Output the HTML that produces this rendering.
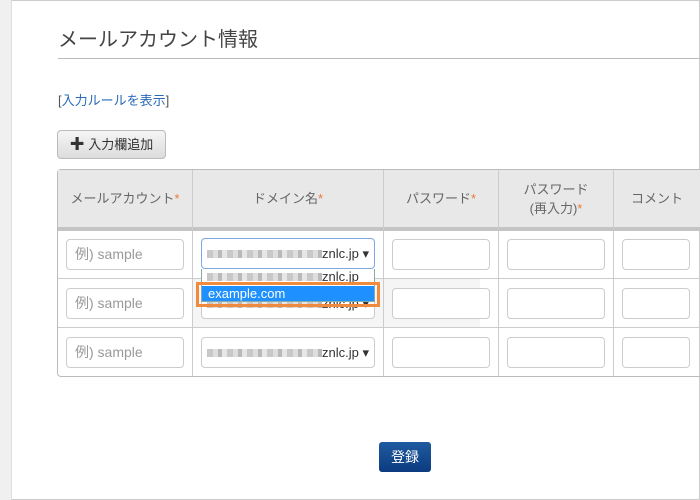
<!DOCTYPE html>
<html><head><meta charset="utf-8"><style>
*{box-sizing:border-box;margin:0;padding:0}
body{width:700px;height:500px;background:#fff;position:relative;overflow:hidden;font-family:"Liberation Sans","Noto Sans CJK JP",sans-serif;color:#555}
.a{position:absolute}
.inp{position:absolute;height:31px;border:1px solid #ccc;border-radius:4px;background:#fff;font-size:14px;color:#999;padding-left:8px;line-height:29px}
.sel{position:absolute;left:201px;width:174px;height:31px;border:1px solid #ccc;border-radius:4px;background:#fff;font-size:13px;color:#333;line-height:29px}
.blur{position:absolute;left:5px;top:11px;width:115px;height:8px;background:repeating-linear-gradient(90deg,#c8c8c8 0 6px,#dedede 6px 11px,#b9b9b9 11px 15px,#e6e6e6 15px 20px)}
.th{position:absolute;top:170px;height:57px;display:flex;align-items:center;justify-content:center;text-align:center;font-size:13px;color:#666;line-height:19px}
.st{color:#e87a3b}
</style></head><body>
<div class="a" style="left:0;top:0;width:700px;height:500px;border:1px solid #ccc;border-left:none"></div>
<div class="a" style="left:0;top:0;width:12px;height:500px;background:#f0f0f0;border-right:1px solid #ddd"></div>
<div class="a" style="left:58px;top:23px;font-size:20px;color:#444">メールアカウント情報</div>
<div class="a" style="left:58px;top:58px;width:642px;height:1px;background:#bbb"></div>
<div class="a" style="left:58px;top:90px;font-size:13px;color:#2a6ab8"><span style="color:#555">[</span>入力ルールを表示<span style="color:#555">]</span></div>
<div class="a" style="left:57px;top:130px;width:109px;height:29px;border:1px solid #bbb;border-radius:4px;background:linear-gradient(#f5f5f5,#dcdcdc);font-size:13px;color:#333;line-height:27px;text-align:center"><b style="font-size:15px">✚</b> 入力欄追加</div>
<!-- table -->
<div class="a" style="left:57px;top:169px;width:645px;height:208px;border:1px solid #bbb;border-radius:4px 0 0 4px"></div>
<div class="a" style="left:58px;top:170px;width:642px;height:57px;background:#e8e8e8"></div>
<div class="a" style="left:58px;top:227px;width:642px;height:4px;background:#c4c4c4"></div>
<div class="a" style="left:192px;top:278px;width:288px;height:49px;background:#f5f5f5"></div>
<div class="a" style="left:58px;top:278px;width:642px;height:1px;background:#ccc"></div>
<div class="a" style="left:58px;top:327px;width:642px;height:1px;background:#ccc"></div>
<div class="a" style="left:192px;top:170px;width:1px;height:206px;background:#ccc"></div>
<div class="a" style="left:383px;top:170px;width:1px;height:206px;background:#ccc"></div>
<div class="a" style="left:498px;top:170px;width:1px;height:206px;background:#ccc"></div>
<div class="a" style="left:613px;top:170px;width:1px;height:206px;background:#ccc"></div>
<div class="th" style="left:58px;width:134px"><div>メールアカウント<span class="st">*</span></div></div>
<div class="th" style="left:193px;width:190px"><div>ドメイン名<span class="st">*</span></div></div>
<div class="th" style="left:384px;width:114px"><div>パスワード<span class="st">*</span></div></div>
<div class="th" style="left:499px;width:114px"><div>パスワード<br>(再入力)<span class="st">*</span></div></div>
<div class="th" style="left:614px;width:86px"><div>コメント</div></div>
<!-- rows -->
<div class="inp" style="left:66px;top:239px;width:118px">例) sample</div>
<div class="inp" style="left:66px;top:288px;width:118px">例) sample</div>
<div class="inp" style="left:66px;top:337px;width:118px">例) sample</div>
<div class="inp" style="left:392px;top:239px;width:98px"></div>
<div class="inp" style="left:392px;top:288px;width:98px"></div>
<div class="inp" style="left:392px;top:337px;width:98px"></div>
<div class="inp" style="left:507px;top:239px;width:98px"></div>
<div class="inp" style="left:507px;top:288px;width:98px"></div>
<div class="inp" style="left:507px;top:337px;width:98px"></div>
<div class="inp" style="left:622px;top:239px;width:68px"></div>
<div class="inp" style="left:622px;top:288px;width:68px"></div>
<div class="inp" style="left:622px;top:337px;width:68px"></div>
<div class="sel" style="top:288px"><div class="blur"></div><span class="a" style="left:120px">znlc.jp ▾</span></div>
<div class="sel" style="top:337px"><div class="blur"></div><span class="a" style="left:120px">znlc.jp ▾</span></div>
<div class="sel" style="top:238px;border-color:#7ea6e0"><div class="blur"></div><span class="a" style="left:120px">znlc.jp ▾</span></div>
<div class="a" style="left:201px;top:269px;width:174px;height:33px;border:1px solid #8aa;border-top:none;background:#fff;font-size:13px;color:#333">
<div class="blur" style="top:4px"></div><span class="a" style="left:120px;top:0;line-height:16px">znlc.jp</span>
<div class="a" style="left:0;top:17px;width:172px;height:15px;background:#1e90ff;color:#fff;line-height:15px;padding-left:6px">example.com</div></div>
<div class="a" style="left:196px;top:282px;width:184px;height:25px;border:3px solid #f08a3c"></div>
<div class="a" style="left:379px;top:442px;width:52px;height:30px;border-radius:3px;background:linear-gradient(#1f5aa0,#0c3b80);color:#fff;font-size:14px;text-align:center;line-height:30px">登録</div>
</body></html>
